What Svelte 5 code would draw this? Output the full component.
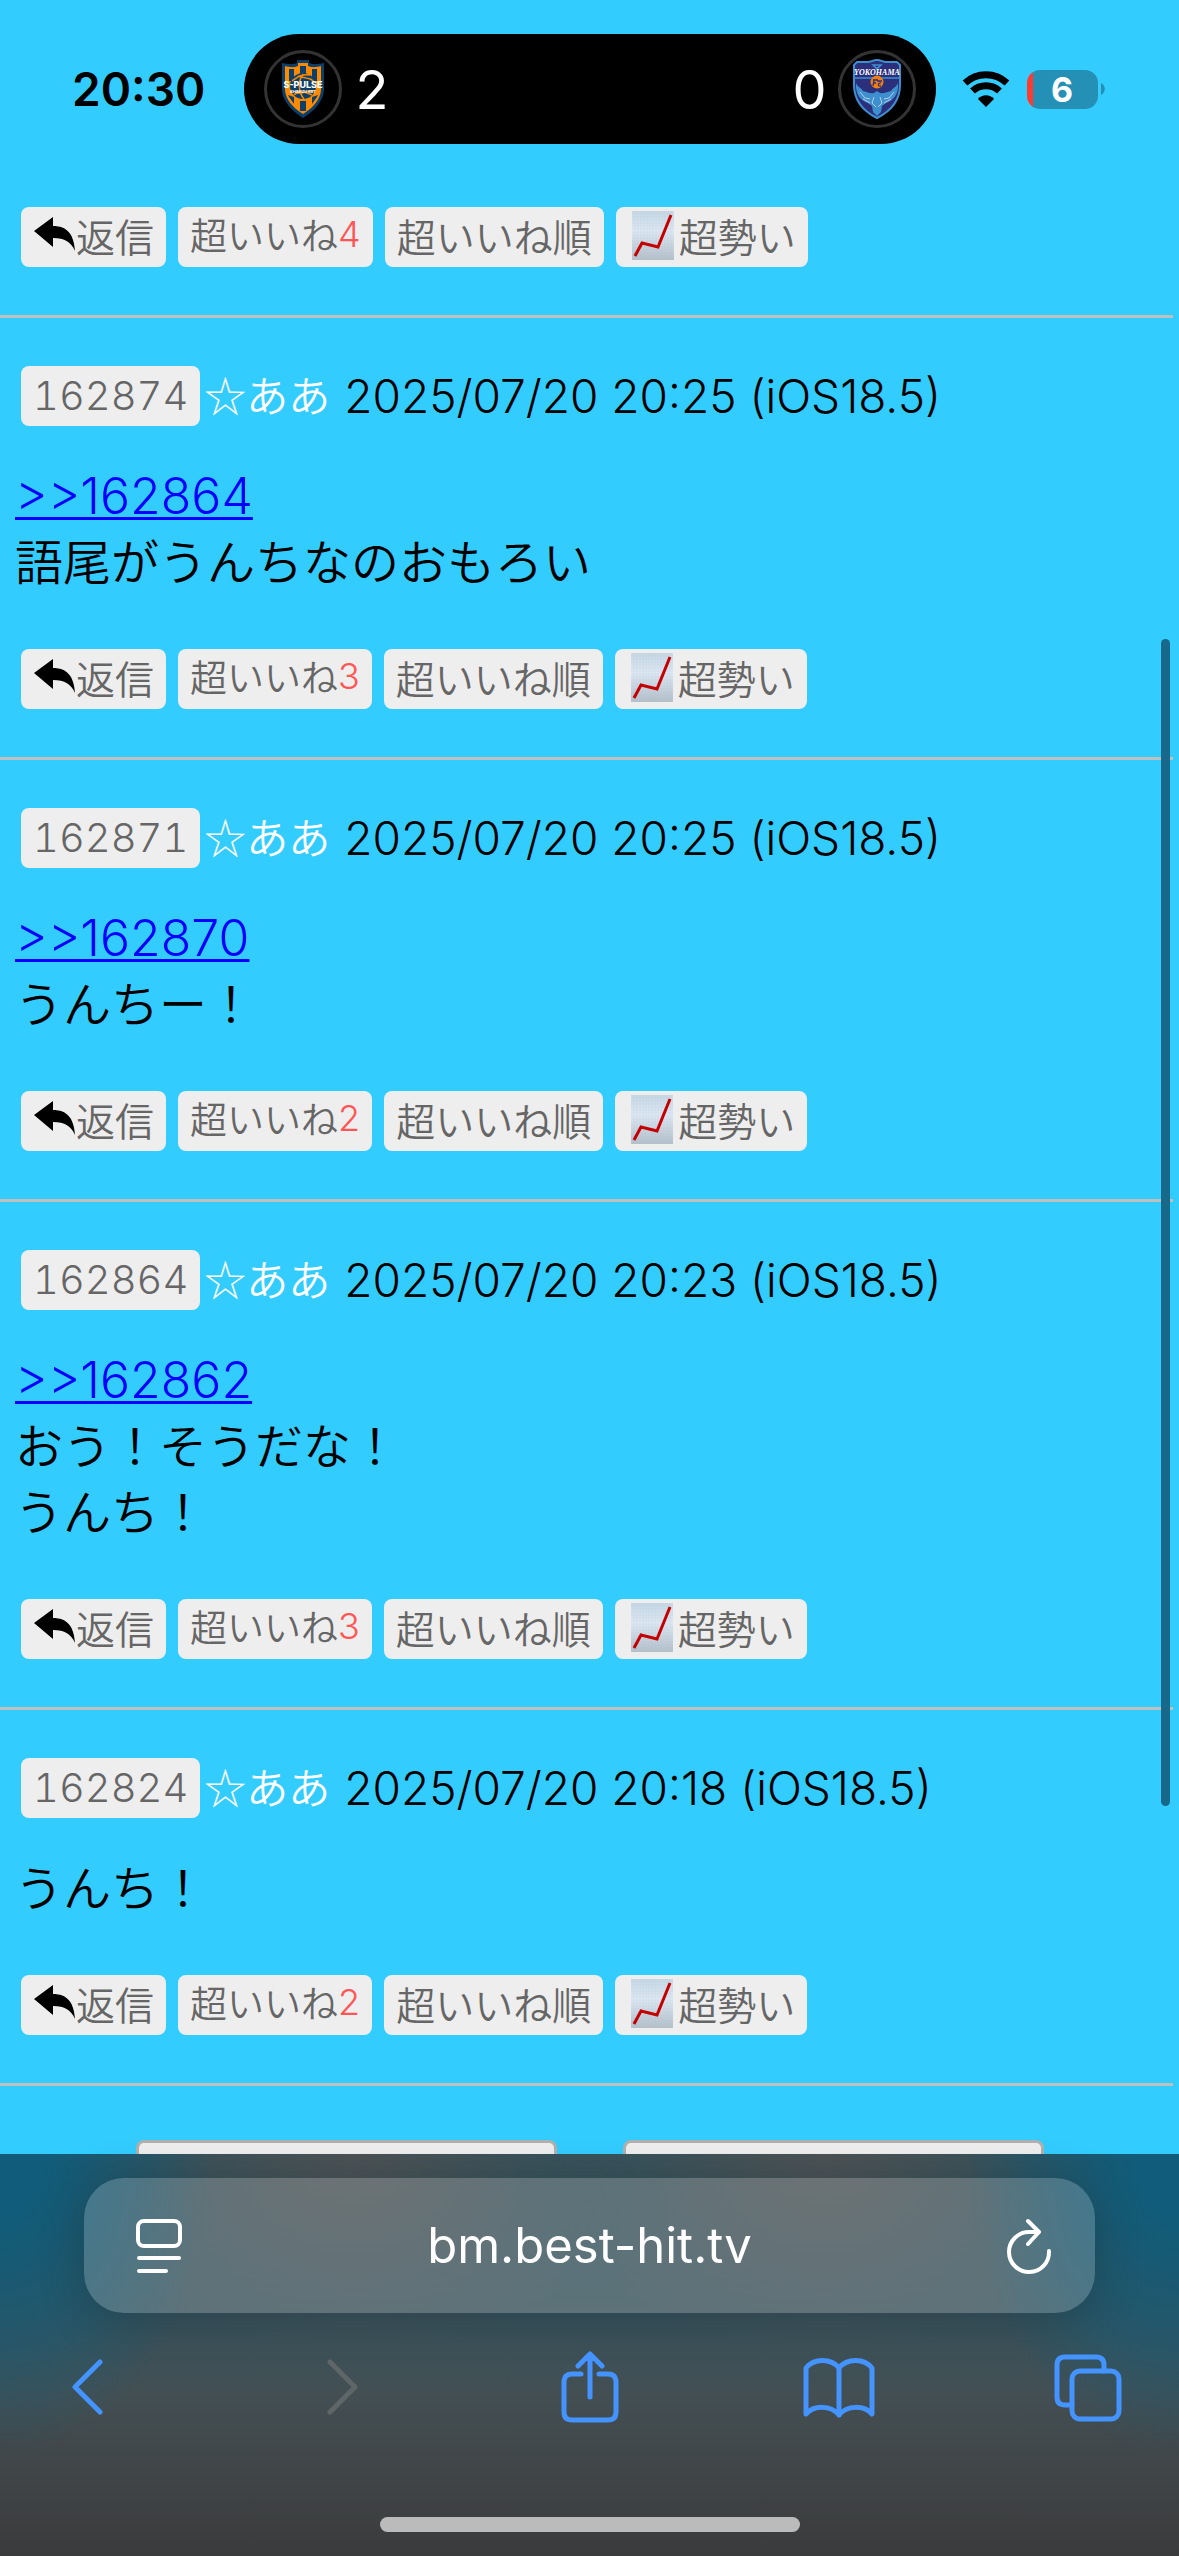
<script lang="ts">
  type Post = { id: string; date: string; reply?: string; lines: string[]; likes: number };

  const posts: Post[] = [
    { id: "162874", date: "2025/07/20 20:25 (iOS18.5)", reply: "162864", lines: ["語尾がうんちなのおもろい"], likes: 3 },
    { id: "162871", date: "2025/07/20 20:25 (iOS18.5)", reply: "162870", lines: ["うんちー！"], likes: 2 },
    { id: "162864", date: "2025/07/20 20:23 (iOS18.5)", reply: "162862", lines: ["おう！そうだな！", "うんち！"], likes: 3 },
    { id: "162824", date: "2025/07/20 20:18 (iOS18.5)", lines: ["うんち！"], likes: 2 },
  ];
</script>

{#snippet actions(likes: number)}
  <div class="actions">
    <button type="button" class="chip">
      <svg width="43" height="36" viewBox="0 0 43 36" aria-hidden="true">
        <path d="M1 14 20 0V9C34 9 41 17 42 34 38 25 32 21 20 21V30Z" fill="#000" />
      </svg>返信
    </button>
    <button type="button" class="chip like">超いいね<span class="count">{likes}</span></button>
    <button type="button" class="chip">超いいね順</button>
    <button type="button" class="chip">
      <svg width="51" height="50" viewBox="0 0 51 50" aria-hidden="true">
        <defs>
          <linearGradient id="paper" x1="0" y1="0" x2="0" y2="1">
            <stop offset="0" stop-color="#c8d9e6" />
            <stop offset="0.4" stop-color="#dfeaf5" />
            <stop offset="1" stop-color="#b4c0ca" />
          </linearGradient>
        </defs>
        <rect x="4" y="1" width="42" height="49" fill="url(#paper)" />
        <path d="M7 1V50M10 1V50M13 1V50M16 1V50M19 1V50M22 1V50M25 1V50M28 1V50M31 1V50M34 1V50M37 1V50M40 1V50M43 1V50M4 4H46M4 7H46M4 10H46M4 13H46M4 16H46M4 19H46M4 22H46M4 25H46M4 28H46M4 31H46M4 34H46M4 37H46M4 40H46M4 43H46M4 46H46" stroke="#a9bac8" stroke-width="1" opacity="0.2" />
        <path d="M7 46 14 33 30 37 43 5" fill="none" stroke="#c40000" stroke-width="3" />
      </svg>超勢い
    </button>
  </div>
{/snippet}

<div class="page">
  <header class="status">
    <time class="clock">20:30</time>
    <div class="island">
      <span class="crest">
        <svg width="46" height="60" viewBox="0 0 46 60" aria-hidden="true">
          <path d="M17 1H29V4C34 6 38 5 44 4V30C44 42 34 52 23 59 12 52 2 42 2 30V4C8 5 12 6 17 4Z" fill="#0b406c" />
          <path d="M18 4H28V7C33 9 37 8 41 7V30C41 40 33 49 23 55 13 49 5 40 5 30V7C9 8 13 9 18 7Z" fill="#ff8a00" />
          <path d="M9 10H14V22H9ZM20 7H26V17H20ZM32 10H37V22H32ZM8 36 14 38V45L9 38ZM20 42H26V52H20ZM38 36 32 38V45L37 38Z" fill="#0b406c" />
          <circle cx="23" cy="27" r="13" fill="#0b406c" />
          <path d="M12 22C18 18 20 15 30 16M14 36C20 30 27 34 32 36M18 17C26 20 32 18 34 24M15 33C22 37 28 30 34 32M23 15C18 22 18 33 24 40" stroke="#ff8a00" stroke-width="1.5" fill="none" />
          <text x="23" y="29" text-anchor="middle" font-size="9" font-weight="800" fill="#fff">S-PULSE</text>
          <text x="23" y="34" text-anchor="middle" font-size="4" font-weight="700" fill="#fff">SHIMIZU EST</text>
        </svg>
      </span>
      <span class="score home-score">2</span>
      <span class="score away-score">0</span>
      <span class="crest">
        <svg width="48" height="60" viewBox="0 0 48 60" aria-hidden="true">
          <path d="M1 6 4 3H15C18 3 20 1 24 1S30 3 33 3H44L47 6V26C47 42 38 52 24 59 10 52 1 42 1 26Z" fill="#2b2f7c" stroke="#3d8fd0" stroke-width="2" />
          <path d="M1 19H47M20 6H28L25 9H23ZM24 8V11" stroke="#3d8fd0" stroke-width="1.5" fill="none" />
          <path d="M3 24C6 30 8 28 10 32 15 33 17 35 21 34L24 32 27 34C31 35 33 33 38 32 40 28 42 30 45 24 46 35 40 42 33 44L29 47 28 53 24 57 20 53 19 47 15 44C8 42 2 35 3 24Z" fill="#3d8fd0" />
          <path d="M7 33 12 39 17 40M41 33 36 39 31 40M10 40 17 44M38 40 31 44M21 38 19 44 23 48M27 38 29 44 25 48" stroke="#b9cfe6" stroke-width="1" fill="none" />
          <circle cx="24" cy="23" r="6.5" fill="#f07f13" />
          <path d="M20 21H25M21 21 20 27M20 24H23M24 22H29M28 24C25 23 24 28 28 27" stroke="#2b2f7c" stroke-width="1.3" fill="none" />
          <text x="24" y="16" text-anchor="middle" font-family="Liberation Serif, serif" font-style="italic" font-size="8" font-weight="700" fill="#fff">YOKOHAMA</text>
        </svg>
      </span>
    </div>
    <div class="signals">
      <svg width="48" height="36" viewBox="0 0 48 36" aria-label="Wi-Fi">
        <path d="M3 12C15 1 33 1 45 12" fill="none" stroke="#000" stroke-width="7" />
        <path d="M10.5 20C18 13 30 13 37.5 20" fill="none" stroke="#000" stroke-width="7" />
        <path d="M16 28C20 23 28 23 32 28L24 36Z" fill="#000" />
      </svg>
      <div class="battery"><span>6</span></div>
      <svg width="4" height="12" viewBox="0 0 4 12" aria-hidden="true"><path d="M0 0C5 2 5 10 0 12Z" fill="#2590b5" /></svg>
    </div>
  </header>

  <main>
    {@render actions(4)}
    <hr />
    {#each posts as post}
      <article>
        <div class="meta">
          <button type="button" class="chip number">{post.id}</button>
          <span class="name">☆ああ</span>
          <time>{post.date}</time>
        </div>
        <p>
          {#if post.reply}<a href="#{post.reply}">&gt;&gt;{post.reply}</a><br />{/if}
          {#each post.lines as line, i}{#if i > 0}<br />{/if}{line}{/each}
        </p>
        {@render actions(post.likes)}
      </article>
      <hr />
    {/each}
    <div class="pager">
      <button type="button" aria-label="前へ"></button>
      <button type="button" aria-label="次へ"></button>
    </div>
  </main>

  <div class="scrollbar"></div>

  <footer>
    <div class="address">
      <button type="button" aria-label="Page menu">
        <svg width="46" height="56" viewBox="0 0 46 56">
          <rect x="2" y="3" width="42" height="25" rx="6" />
          <path d="M3 40H43M3 53H30" />
        </svg>
      </button>
      <input type="text" aria-label="Address" value="bm.best-hit.tv" />
      <button type="button" aria-label="Reload">
        <svg width="55" height="56" viewBox="-9 0 55 56">
          <path d="M33 14H23A20 20 0 1 0 43 33M22 3 33 14 22 26" />
        </svg>
      </button>
    </div>
    <nav>
      <button type="button" aria-label="Back">
        <svg width="36" height="72" viewBox="0 0 36 72"><path d="M27 11 2 36 27 61" /></svg>
      </button>
      <button type="button" aria-label="Forward" disabled>
        <svg width="36" height="72" viewBox="0 0 36 72"><path d="M8 11 33 36 8 61" /></svg>
      </button>
      <button type="button" aria-label="Share">
        <svg width="58" height="72" viewBox="0 0 58 72">
          <path d="M20 23H11Q3 23 3 31V61Q3 69 11 69H47Q55 69 55 61V31Q55 23 47 23H38M29 46V4M17 15 29 3 41 15" />
        </svg>
      </button>
      <button type="button" aria-label="Bookmarks">
        <svg width="72" height="72" viewBox="0 0 72 72">
          <path d="M36 17C28 7 11 7 3 17V63C11 54 28 54 36 64 44 54 61 54 69 63V17C61 7 44 7 36 17V64" />
        </svg>
      </button>
      <button type="button" aria-label="Tabs">
        <svg width="68" height="72" viewBox="0 0 68 72">
          <path d="M18 54H11Q3 54 3 46V14Q3 6 11 6H42Q50 6 50 14V20" />
          <rect x="18" y="20" width="47" height="48" rx="8" />
        </svg>
      </button>
    </nav>
    <div class="home"></div>
  </footer>
</div>

<style>
  :global(body) {
    margin: 0;
    background: #33ccff;
  }

  .page {
    min-height: 100vh;
    color: #000;
    font-family: Inter, "Noto Sans CJK JP", sans-serif;
    font-weight: 350;
  }

  button {
    border: 0;
    padding: 0;
    background: none;
    font: inherit;
    color: inherit;
  }

  svg {
    display: block;
    flex: none;
  }

  .status {
    display: grid;
    grid-template-columns: 1fr minmax(0, 692px) 1fr;
    align-items: center;
    padding-top: 34px;
  }

  .clock {
    padding-left: 34px;
    text-align: center;
    font-size: 46px;
    font-weight: 600;
  }

  .island {
    display: flex;
    align-items: center;
    height: 110px;
    padding: 0 20px;
    box-sizing: border-box;
    border-radius: 55px;
    background: #000;
    color: #fff;
  }

  .crest {
    display: flex;
    align-items: center;
    justify-content: center;
    width: 72px;
    height: 72px;
    border: 3px solid #333;
    border-radius: 50%;
  }

  .score {
    font-size: 54px;
    font-weight: 400;
  }

  .home-score {
    margin-left: 14px;
  }

  .away-score {
    margin: 0 11px 0 auto;
  }

  .signals {
    display: flex;
    align-items: center;
    padding-left: 26px;
  }

  .battery {
    display: flex;
    align-items: center;
    justify-content: center;
    width: 71px;
    height: 39px;
    margin: 0 3px 0 17px;
    border-radius: 13px;
    background: linear-gradient(90deg, #ff3b30 6px, #2590b5 6px);
    color: #fff;
    font-size: 34px;
    font-weight: 700;
  }

  main {
    padding-top: 63px;
  }

  hr {
    height: 3px;
    margin: 0 6px 0 0;
    border: 0;
    background: #c0c0c0;
  }

  article {
    padding-top: 48px;
  }

  .actions {
    display: flex;
    gap: 12px;
    padding: 0 21px 48px;
  }

  .chip {
    display: flex;
    align-items: center;
    height: 60px;
    padding: 0 12px 4px;
    border-radius: 8px;
    background: #eee;
    color: #666;
    font-size: 39px;
    white-space: nowrap;
  }

  .like {
    padding-bottom: 6px;
    font-size: 37px;
  }

  .count {
    color: #ff5555;
    font-size: 36px;
  }

  .meta {
    display: flex;
    align-items: center;
    padding-left: 21px;
    font-size: 46px;
    line-height: 60px;
  }

  .number {
    padding-bottom: 0;
    font-size: 40px;
    font-variant-numeric: tabular-nums;
  }

  .name {
    margin: 0 14px 0 4px;
    padding-bottom: 4px;
    color: #fff;
    font-family: "Noto Sans CJK JP", sans-serif;
    font-size: 42px;
    line-height: 56px;
  }

  p {
    margin: 0;
    padding: 38px 15px 53px;
    font-size: 48px;
    line-height: 66px;
  }

  a {
    color: #0000ff;
    font-size: 50px;
    line-height: 50px;
    text-decoration-thickness: 3px;
    text-underline-offset: 3px;
  }

  .pager {
    display: flex;
    justify-content: center;
    gap: 66px;
    padding-top: 54px;
  }

  .pager button {
    width: 421px;
    height: 84px;
    border: 3px solid #b0b0b0;
    border-radius: 8px;
    background: #eee;
  }

  .scrollbar {
    position: absolute;
    top: 25%;
    right: 9px;
    width: 9px;
    height: 1167px;
    border-radius: 5px;
    background: #18688a;
  }

  footer {
    position: fixed;
    right: 0;
    bottom: 0;
    left: 0;
    padding: 24px 0;
    background:
      radial-gradient(ellipse 18% 75% at 0 0, #105c7a 20%, transparent),
      radial-gradient(ellipse 18% 75% at 100% 0, #105c7a 20%, transparent),
      radial-gradient(ellipse 24% 50% at 30% 0, #4d5254, transparent),
      radial-gradient(ellipse 24% 50% at 70% 0, #4d5254, transparent),
      linear-gradient(#2f525d, #38525b 40%, #434f53 60%, #3f4244 85%, #3a3b3d);
  }

  .address {
    display: flex;
    align-items: center;
    justify-content: space-between;
    height: 135px;
    margin: 0 84px;
    padding: 0 43px 0 52px;
    border-radius: 40px;
    background: rgba(255, 255, 255, 0.19);
    box-shadow: 0 6px 40px rgba(20, 40, 48, 0.35);
  }

  .address svg {
    fill: none;
    stroke: #fff;
    stroke-width: 4;
    stroke-linecap: round;
    stroke-linejoin: round;
  }

  input {
    flex: 1;
    min-width: 0;
    border: 0;
    padding: 0;
    background: none;
    color: #fff;
    font: 400 49px Inter, sans-serif;
    text-align: center;
  }

  nav {
    display: flex;
    align-items: center;
    justify-content: space-between;
    padding: 38px 55px 94px;
  }

  nav button {
    display: flex;
    justify-content: center;
    width: 72px;
  }

  nav svg {
    overflow: visible;
    fill: none;
    stroke: #4493ff;
    stroke-width: 5;
    stroke-linecap: round;
    stroke-linejoin: round;
  }

  nav button:disabled svg {
    stroke: #5f6668;
  }

  .home {
    width: 420px;
    height: 15px;
    margin: 0 auto;
    border-radius: 8px;
    background: #bbb;
  }
</style>
